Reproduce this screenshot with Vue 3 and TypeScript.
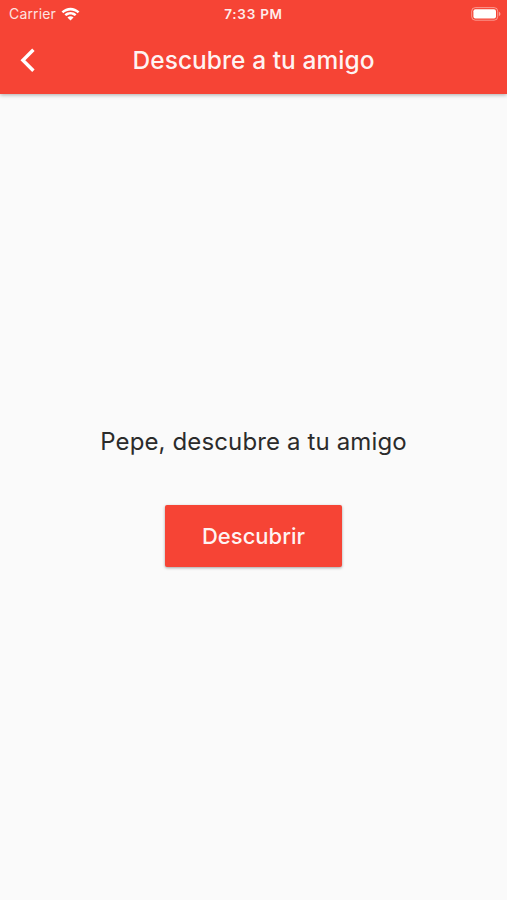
<script setup lang="ts">
const title: string = 'Descubre a tu amigo'
const friend: string = 'Pepe'
</script>

<template>
  <div class="screen">
    <header class="bar">
      <div class="status">
        <div class="carrier">
          <span class="carrier-name">Carrier</span>
          <svg class="wifi" viewBox="0 0 18 14" width="19" height="14" preserveAspectRatio="none">
            <path d="M0.5 4.6C5.4-.6 12.6-.6 17.5 4.6L15.8 6.3C11.9 2.5 6.1 2.5 2.2 6.3Z" />
            <path d="M3.3 7.4C6.6 4.2 11.4 4.2 14.7 7.4L13 9.1C10.7 6.9 7.3 6.9 5 9.1Z" />
            <path d="M6.1 10.4C7.8 8.9 10.2 8.9 11.9 10.4L9 13.5Z" />
          </svg>
        </div>
        <span class="time">7:33 PM</span>
        <svg class="battery" viewBox="0 0 30 14" width="30" height="14">
          <rect class="shell" x="0.7" y="0.6" width="26" height="12.6" rx="3.6" />
          <rect x="2.4" y="2.3" width="22.6" height="9.2" rx="2" />
          <path class="cap" d="M27.9 4.7C29.9 5.4 29.9 8.4 27.9 9.1Z" />
        </svg>
      </div>
      <div class="nav">
        <button class="back" aria-label="Atrás">
          <svg viewBox="0 0 16 25" width="16" height="25">
            <path d="M13.4 1.8L2.9 12.3L13.4 22.8" />
          </svg>
        </button>
        <h1 class="title">{{ title }}</h1>
      </div>
    </header>
    <main class="body">
      <p class="message">{{ friend }}, descubre a tu amigo</p>
      <button class="action">Descubrir</button>
    </main>
  </div>
</template>

<style>
body {
  margin: 0;
  background: #fafafa;
}
</style>

<style scoped>
.screen {
  display: flex;
  flex-direction: column;
  height: 900px;
  background: #fafafa;
  font-family: Inter, "Liberation Sans", sans-serif;
}
.bar {
  height: 94px;
  background: #f64435;
  color: #fff;
  box-shadow: 0 1px 4px rgba(0, 0, 0, 0.32);
}
.status {
  display: grid;
  grid-template-columns: 1fr auto 1fr;
  align-items: center;
  height: 27px;
  padding: 0 6px 0 9px;
}
.carrier {
  display: flex;
  align-items: center;
  gap: 5px;
}
.carrier-name {
  font-size: 14px;
  letter-spacing: 0.15px;
  opacity: 0.85;
}
.wifi, .battery {
  fill: #fff;
}
.time {
  margin-right: 3px;
  font-size: 13.5px;
  font-weight: 600;
  letter-spacing: 0.75px;
  opacity: 0.9;
}
.battery {
  justify-self: end;
}
.shell {
  fill: none;
  stroke: #fff;
  stroke-opacity: 0.45;
}
.cap {
  opacity: 0.5;
}
.nav {
  display: grid;
  grid-template-columns: 56px 1fr 56px;
  align-items: center;
  height: 66px;
}
.back {
  display: flex;
  justify-content: center;
  padding: 0;
  border: 0;
  background: none;
}
.back path {
  fill: none;
  stroke: #fff;
  stroke-width: 3.4;
}
.title {
  margin: 0;
  text-align: center;
  white-space: nowrap;
  font-size: 24.5px;
  font-weight: 500;
  letter-spacing: 0.05px;
  color: rgba(255, 255, 255, 0.94);
}
.body {
  display: flex;
  flex: 1;
  flex-direction: column;
  align-items: center;
  padding-top: 332px;
}
.message {
  margin: 0;
  font-size: 24px;
  line-height: 32px;
  letter-spacing: 0.13px;
  color: #2b2b2b;
}
.action {
  width: 177px;
  height: 62px;
  margin-top: 47px;
  padding: 0;
  border: 0;
  border-radius: 2px;
  background: #f64435;
  color: rgba(255, 255, 255, 0.94);
  font: 500 22px Inter, sans-serif;
  box-shadow: 0 1px 3px rgba(0, 0, 0, 0.35);
}
</style>
